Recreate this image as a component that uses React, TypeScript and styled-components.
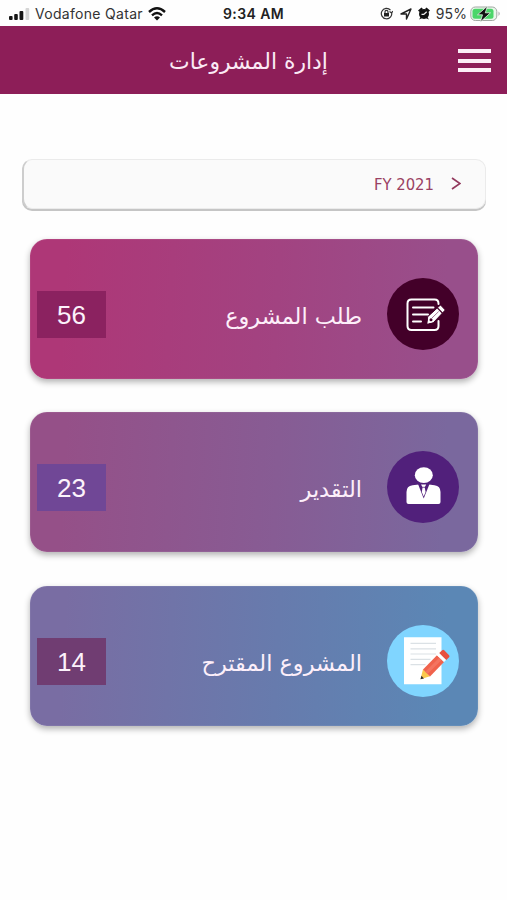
import React from "react";
import styled, { createGlobalStyle } from "styled-components";

const GlobalStyle = createGlobalStyle`
  * { box-sizing: border-box; }
  body { margin: 0; background: #fefefe; }
`;

const Screen = styled.div`
  width: 507px;
  height: 900px;
  overflow: hidden;
  background: #fefefe;
  font-family: "DejaVu Sans", "Noto Sans", sans-serif;
`;

const StatusBar = styled.div`
  height: 26px;
  padding: 1px 6px 0 9px;
  display: grid;
  grid-template-columns: 1fr auto 1fr;
  align-items: center;
  font-family: Inter, sans-serif;
  font-size: 14px;
  color: #333;
`;

const StatusGroup = styled.div<{ $end?: boolean }>`
  display: flex;
  align-items: center;
  justify-content: ${(p) => (p.$end ? "flex-end" : "flex-start")};
  white-space: nowrap;
`;

const Carrier = styled.span`
  width: 108px;
  margin: 0 5px 0 5px;
  letter-spacing: 0.3px;
`;

const Clock = styled.span`
  margin-right: 3px;
  font-weight: 600;
  color: #222;
  letter-spacing: 0.4px;
`;

const Percent = styled.span`
  margin: 0 3px 0 6px;
  letter-spacing: 0.1px;
`;

const Glyph = styled.svg<{ $gap?: number }>`
  display: block;
  flex: none;
  margin-left: ${(p) => p.$gap ?? 0}px;
`;

const Header = styled.header`
  height: 68px;
  background: #8d1e58;
  padding: 0 16px 0 0;
  display: grid;
  grid-template-columns: 1fr auto 1fr;
  align-items: center;
`;

const Title = styled.h1`
  grid-column: 2;
  margin: 4px 0 0 6px;
  font-size: 21.9px;
  font-weight: 400;
  line-height: 34px;
  color: #fbeaf5;
  white-space: nowrap;
`;

const MenuButton = styled.button`
  justify-self: end;
  width: 33px;
  height: 23px;
  margin-top: 1px;
  padding: 0;
  border: 0;
  background: none;
  display: flex;
  flex-direction: column;
  justify-content: space-between;
`;

const MenuBar = styled.span`
  width: 33px;
  height: 4px;
  background: #fbeef6;
`;

const Content = styled.main`
  padding: 65px 0 0;
`;

const YearPicker = styled.button`
  width: 464px;
  height: 50px;
  margin: 0 0 0 22px;
  padding: 0 24px 0 0;
  display: flex;
  justify-content: flex-end;
  align-items: center;
  gap: 17px;
  border: 1px solid #ebebeb;
  border-left: 2px solid #cdcdcd;
  border-radius: 10px;
  background: #fafafa;
  box-shadow: 0 2px 0 #c5c5c5;
  color: #9a4163;
  font-family: "DejaVu Sans Condensed", "DejaVu Sans", sans-serif;
  font-size: 16.5px;
  white-space: nowrap;
`;

const Cards = styled.div`
  margin: 30px 0 0 30px;
  display: flex;
  flex-direction: column;
  gap: 33.4px;
`;

const Card = styled.section<{ $from: string; $mid: string; $to: string }>`
  width: 448px;
  height: 140px;
  padding: 0 19px 0 7px;
  display: flex;
  align-items: center;
  border-radius: 17px;
  background: linear-gradient(93deg, ${(p) => p.$from} 8%, ${(p) => p.$mid} 55%, ${(p) => p.$to} 92%);
  box-shadow: 0 3px 6px rgba(0, 0, 0, 0.3), inset 0 0 1px rgba(255, 255, 255, 0.6);
`;

const Count = styled.div<{ $color: string }>`
  width: 69px;
  height: 47px;
  margin-top: 11px;
  display: grid;
  place-items: center;
  background: ${(p) => p.$color};
  color: #fcf2fb;
  font: 26px/49px "Liberation Sans", Arial, sans-serif;
`;

const Label = styled.h2`
  flex: 1;
  margin: 14px 25px 0 0;
  text-align: right;
  font-size: 22.4px;
  line-height: 36px;
  font-weight: 400;
  color: #fdeffa;
`;

const Disc = styled.div<{ $color: string }>`
  width: 72px;
  height: 72px;
  margin-top: 10px;
  border-radius: 50%;
  background: ${(p) => p.$color};
`;

function FormIcon() {
  return (
    <Glyph width="72" height="72" viewBox="0 0 72 72" fill="none" stroke="#fff" strokeWidth="2" strokeLinecap="round">
      <path d="M51.500 26v-.5q0-4-4-4H24.500q-4 0-4 4V48q0 4 4 4h23q4 0 4-4v-5" />
      <path d="M26 29.500h20.500M26 36.500h15M26 43.500h8" />
      <path d="M40 46l1-7.500L53.500 27l4.700 5L46.500 44.500z" fill="#fff" stroke="#430029" strokeWidth="1" />
      <path d="M40.500 45.500l.8-6.500L53.500 28l4 4L46 44z" fill="#fff" stroke="none" />
      <path d="M50.500 30l4.800 5" stroke="#430029" strokeWidth="1.100" />
      <path d="M45.200 39.800l6.200-6" stroke="#8c5679" strokeWidth=".8" />
      <circle cx="44" cy="41.700" r="1.500" fill="#430029" stroke="none" />
    </Glyph>
  );
}

function PersonIcon() {
  return (
    <Glyph width="72" height="72" viewBox="0 0 72 72">
      <ellipse cx="36.800" cy="24.200" rx="9" ry="7.900" fill="#fff" />
      <path d="M19.500 51V41q0-6 6-6.800l6.500-.6h10l5.500.6q6 .8 6 6.800v10q0 2-2 2h-30q-2 0-2-2z" fill="#fff" />
      <path d="M31 33L36.700 47.500 42.500 33z" fill="#51207b" />
      <path d="M34 33.500h5.200l-1.500 2.800.9 4.700-1.900 4.500-1.900-4.500.8-4.700z" fill="#fff" />
      <path d="M35.200 36.300h3" stroke="#51207b" strokeWidth=".7" />
    </Glyph>
  );
}

function NoteIcon() {
  return (
    <Glyph width="72" height="72" viewBox="0 0 72 72">
      <path d="M17 12.300h37.500v47H17z" fill="#fff" />
      <path d="M23.500 18.300h25.500M23.500 23.800h25.500M23.500 29h25.500M23.500 34.300h20M23.500 39.600h15" stroke="#dbe1e5" strokeWidth="1.200" />
      <path d="M33.500 54.300l2.500-10L43 51.300z" fill="#fbc84c" />
      <path d="M33.500 54.300l.9-3.600 2.600 2.700z" fill="#333" />
      <path d="M36 44.500L50 30.300l7 6.700L43 51.500z" fill="#f0624c" />
      <path d="M38.300 46.800l14.200-14.300 2.300 2.300-14.200 14.300z" fill="#f47460" />
      <path d="M50 30.300l2.300-2.400 7 6.800L57 37z" fill="#fff" />
      <path d="M52.200 28l3-2.700q1-.9 2 0l4.900 4.900q.9 1 0 2L59.300 35z" fill="#e84f3e" />
    </Glyph>
  );
}

const items = [
  { label: "طلب المشروع", count: 56, tint: "#8b2260", from: "#ae3777", mid: "#a24381", to: "#984f8b", disc: "#430029", Icon: FormIcon },
  { label: "التقدير", count: 23, tint: "#704796", from: "#955088", mid: "#875c94", to: "#7a689e", disc: "#51207b", Icon: PersonIcon },
  { label: "المشروع المقترح", count: 14, tint: "#703d72", from: "#796da3", mid: "#677bad", to: "#5b87b5", disc: "#80d5ff", Icon: NoteIcon },
];

export default function App() {
  return (
    <Screen>
      <GlobalStyle />
      <StatusBar>
        <StatusGroup>
          <Glyph width="21" height="14" viewBox="0 0 21 14" fill="#161616">
            <rect x="0" y="9" width="3.600" height="4" rx="1" />
            <rect x="5.200" y="7" width="3.600" height="6" rx="1" />
            <rect x="10.500" y="4" width="3.800" height="9" rx="1" />
            <rect x="16.500" y="1" width="3.700" height="12" rx="1" fill="#d5d5d5" />
          </Glyph>
          <Carrier>Vodafone Qatar</Carrier>
          <Glyph width="18" height="14" viewBox="0 0 18 14" fill="none" stroke="#111" strokeWidth="2.400">
            <path d="M1 5Q9-2.300 17 5M4 8.300Q9 3.900 14 8.300" />
            <path d="M6 10.500Q9 8 12 10.500L9 13.500z" fill="#111" stroke="none" />
          </Glyph>
        </StatusGroup>
        <Clock>9:34 AM</Clock>
        <StatusGroup $end>
          <Glyph width="13" height="13" viewBox="0 0 13 13" fill="none" stroke="#333" strokeWidth="1.200">
            <path d="M10.500 3.200A5.200 5.200 0 1 0 11.500 5M9.500 4.500l2.200 1.500 1-2" />
            <path d="M4 6h5v3.500H4z" fill="#222" stroke="none" />
            <path d="M5 6V4.800a1.500 1.500 0 0 1 3 0V6" />
          </Glyph>
          <Glyph $gap={7} width="12" height="12" viewBox="0 0 12 12" fill="none" stroke="#222" strokeWidth="1.400" strokeLinejoin="round">
            <path d="M1 6L11 1 6.500 11V6z" />
          </Glyph>
          <Glyph $gap={6} width="12" height="13" viewBox="0 0 12 13" fill="#111">
            <circle cx="6" cy="7" r="5" />
            <path d="M0 3.500L3.500.5 5 2 1.500 5zM12 3.500L8.500.5 7 2l3.500 3zM1 12.500l2-3 1.500 1.500zM11 12.500l-2-3L7.500 11z" />
            <path d="M6 7.300l2.700-2.600M6 7.300H3.500" stroke="#eee" strokeWidth="1.200" />
          </Glyph>
          <Percent>95%</Percent>
          <Glyph width="31" height="16" viewBox="0 0 31 16">
            <rect x=".8" y="1" width="26" height="13.500" rx="4.500" fill="#e8f7ea" stroke="#a2a8a3" />
            <rect x="2.500" y="2.700" width="21" height="10" rx="2.500" fill="#4bd669" />
            <path d="M28.500 5.500q2.500 2.200 0 4.500z" fill="#aaa" />
            <path d="M17.500 0L7.500 8.800h5L10.300 16 20.500 6.800h-5.200z" fill="#111" stroke="#e8f7ea" strokeWidth=".8" />
          </Glyph>
        </StatusGroup>
      </StatusBar>
      <Header>
        <Title dir="rtl">إدارة المشروعات</Title>
        <MenuButton aria-label="Menu">
          <MenuBar />
          <MenuBar />
          <MenuBar />
        </MenuButton>
      </Header>
      <Content>
        <YearPicker>
          <span>FY 2021</span>
          <Glyph width="10" height="14" viewBox="0 0 10 14" fill="none" stroke="#92395d" strokeWidth="1.700">
            <path d="M1 1L9 6.500 1 12" />
          </Glyph>
        </YearPicker>
        <Cards>
          {items.map(({ label, count, tint, from, mid, to, disc, Icon }) => (
            <Card key={count} $from={from} $mid={mid} $to={to}>
              <Count $color={tint}>{count}</Count>
              <Label>
                <bdi>{label}</bdi>
              </Label>
              <Disc $color={disc}>
                <Icon />
              </Disc>
            </Card>
          ))}
        </Cards>
      </Content>
    </Screen>
  );
}
